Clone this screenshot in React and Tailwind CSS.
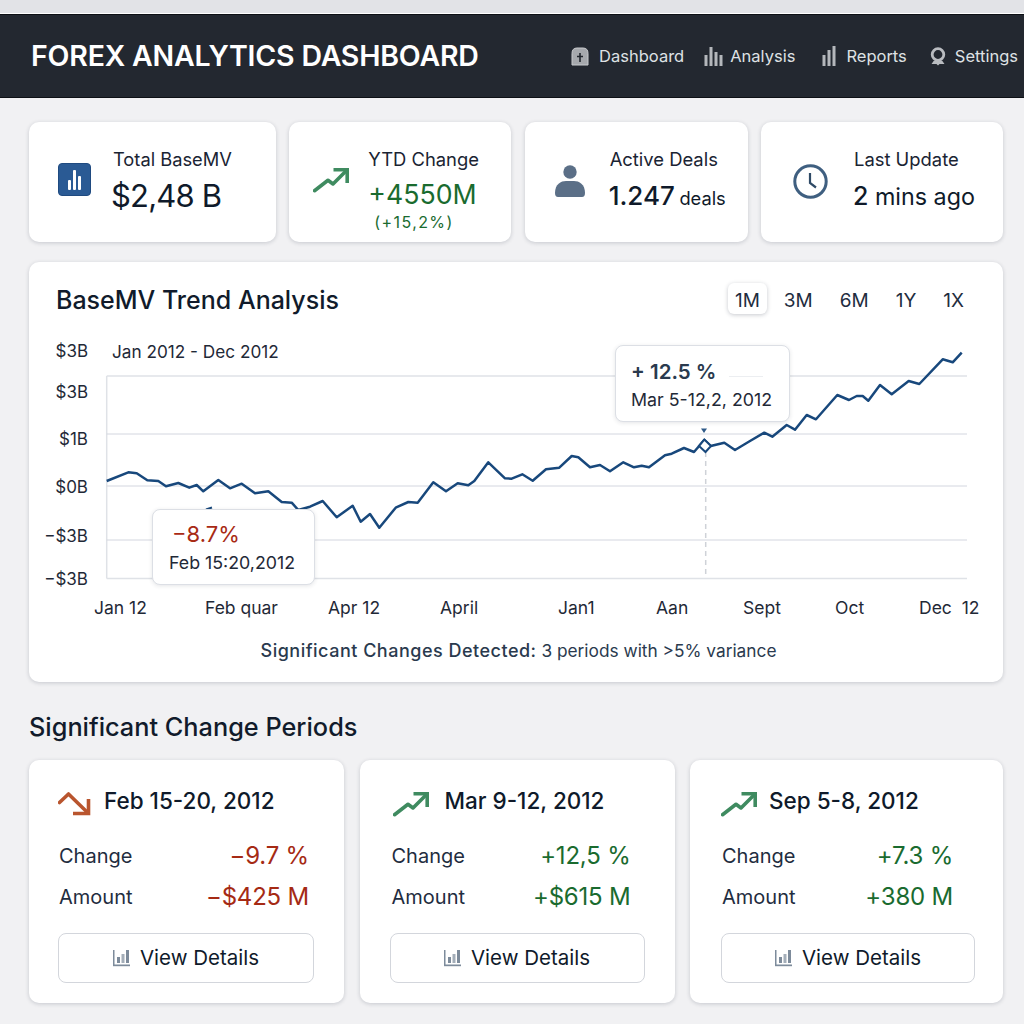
import React from 'react'

const linePoints = [
  [106.7, 481], [128.3, 472.3], [136.7, 473.3], [147.3, 480.3], [158.3, 481], [166, 486.3], [178.3, 483], [189.3, 487.7],
  [196.7, 485], [203.3, 491.3], [218.3, 480], [230, 488.3], [241.7, 483.7], [255, 493.3], [268.3, 491.3], [281.7, 502],
  [291.7, 502.7], [298.3, 510], [310, 506.7], [322.7, 501], [336.7, 517.3], [352.7, 505.7], [360.7, 521.7], [370, 514],
  [379.3, 527.7], [395.7, 507.7], [408.3, 502], [417.7, 502.7], [433.3, 482.3], [446, 491.3], [457.7, 483.3], [468.3, 485.3],
  [474.3, 481], [488.3, 462.3], [505, 478.3], [511.7, 478.7], [522.3, 474.3], [532.7, 480.7], [546, 469.3], [559.3, 467.7],
  [571.7, 456], [578.3, 457.3], [590, 467.3], [600, 465], [610, 471.3], [623.3, 462.3], [634, 467.3], [641.7, 465.7],
  [649, 467.3], [665, 455.3], [671.7, 453.7], [684, 448], [694, 452], [704.3, 440], [710.7, 446], [724.3, 442.7],
  [735, 450], [750, 441], [764.3, 432.7], [772.3, 436.7], [786.7, 425], [795, 429.7], [806.7, 415], [816, 419.3],
  [837.3, 395], [849, 400], [856.7, 396], [862.7, 396], [868.3, 400.7], [880, 385], [891.7, 394.3], [908.7, 381],
  [919.3, 384], [942.7, 359.3], [952.7, 362.3], [961.7, 352.7],
]

// Nav icons
const HomeIcon = () => (
  <svg width="18" height="19" viewBox="0 0 18 19">
    <path d="M1 18V6.500Q1 1 6 1h6q5 0 5 5.500V18z" fill="#a6a9ad" stroke="#c9cbce" strokeWidth="1" />
    <path d="M9 6v9M6 9.500h6" stroke="#22272e" strokeWidth="1.600" />
  </svg>
)

const AnalysisIcon = () => (
  <svg width="19" height="21" viewBox="0 0 19 21" fill="#b4b7bb">
    <rect x="0.500" y="9" width="3" height="11" />
    <rect x="5.500" y="1" width="3" height="19" />
    <rect x="10.500" y="6" width="3" height="14" />
    <rect x="15.500" y="9" width="3" height="11" />
  </svg>
)

const ReportsIcon = () => (
  <svg width="14" height="20" viewBox="0 0 14 20" fill="#b4b7bb">
    <rect x="0.500" y="9" width="3" height="11" />
    <rect x="5.500" y="4" width="3" height="16" />
    <rect x="10.500" y="0" width="3" height="20" />
  </svg>
)

const SettingsIcon = () => (
  <svg width="16" height="19" viewBox="0 0 16 19">
    <circle cx="8" cy="7.500" r="5.800" fill="none" stroke="#b9bcc0" strokeWidth="2.800" />
    <path d="M4 13.500h8l2.500 3.500H9.500L8 18.500 6.500 17H1.500z" fill="#b9bcc0" />
  </svg>
)

const TrendUp = () => (
  <svg width="36" height="25" viewBox="0 0 36 25" fill="none" stroke="#3f8b60" strokeWidth="3.600">
    <path d="M1.500 22.700 15 12.300l5 3.700L33 3" strokeLinecap="round" strokeLinejoin="round" />
    <path d="M20.500 1.800H34.200V15" strokeLinejoin="miter" />
  </svg>
)

const TrendDown = () => (
  <svg width="33" height="24" viewBox="0 0 33 24" fill="none" stroke="#b9552e" strokeWidth="3.600">
    <path d="M1.500 10.500 10.500 2 29 20" strokeLinecap="round" strokeLinejoin="round" />
    <path d="M15 21.500H30.500V7" />
  </svg>
)

const BaseIcon = () => (
  <svg width="33" height="33" viewBox="0 0 33 33">
    <rect x="0.500" y="0.500" width="32" height="32" rx="3.500" fill="#2a5a94" stroke="#1f4a80" />
    <rect x="10" y="17" width="3" height="10" rx="1" fill="#fff" />
    <rect x="15" y="7" width="3" height="20" rx="1" fill="#fff" />
    <rect x="20" y="13" width="3" height="14" rx="1" fill="#fff" />
  </svg>
)

const PersonIcon = () => (
  <svg width="30" height="32" viewBox="0 0 30 32" fill="#5b6f87">
    <circle cx="15" cy="7" r="6.700" />
    <path d="M0 28c0-9 6-12 11-12h8c5 0 11 3 11 12 0 2.500-1 4-3 4H3c-2 0-3-1.500-3-4z" />
  </svg>
)

const ClockIcon = () => (
  <svg width="35" height="35" viewBox="0 0 35 35" fill="none" stroke="#3f5f80">
    <circle cx="17.500" cy="17.500" r="15.700" strokeWidth="3" />
    <path d="M17 9v10l6 4.500" strokeWidth="2.200" stroke="#2f4a66" />
  </svg>
)

const DetailsIcon = () => (
  <svg width="17" height="18" viewBox="0 0 17 18" fill="#7d8b9b">
    <rect x="0" y="1" width="1.500" height="16" />
    <rect x="0" y="15.500" width="17" height="1.700" />
    <rect x="4" y="8" width="3" height="6" />
    <rect x="8.500" y="5" width="3" height="9" opacity="0.700" />
    <rect x="13" y="1" width="3" height="13" />
  </svg>
)

const navItems = [
  { label: 'Dashboard', icon: <HomeIcon />, cls: 'gap-[10px]' },
  { label: 'Analysis', icon: <AnalysisIcon />, cls: 'gap-[7px] ml-[20px]' },
  { label: 'Reports', icon: <ReportsIcon />, cls: 'gap-[10px] ml-[27px]' },
  { label: 'Settings', icon: <SettingsIcon />, cls: 'gap-[9px] ml-[23px]' },
]

const Header = () => (
  <>
    <div className="h-[13px] bg-[#e2e3e7]" />
    <div className="h-px bg-white" />
    <header className="flex h-[84px] items-center justify-between border-y border-[#0d1015] bg-[#232830] pl-[31px] pr-[6px]">
      <h1 className="text-[28.500px] font-semibold tracking-[-0.200px] text-white">FOREX ANALYTICS DASHBOARD</h1>
      <nav className="flex items-center">
        {navItems.map(item => (
          <div key={item.label} className={`flex items-center ${item.cls}`}>
            {item.icon}
            <span className="text-[16.500px] text-[#dfe1e4]">{item.label}</span>
          </div>
        ))}
      </nav>
    </header>
  </>
)

const cardCls = 'rounded-[10px] bg-white shadow-[0_1px_4px_rgba(30,40,60,0.2)]'

const StatCards = () => (
  <div className="grid grid-cols-[247px_222px_223px_242px] gap-[13.330px]">
    {/* Total BaseMV */}
    <div className={`${cardCls} flex h-[120px] pl-[29px] pt-[24px]`}>
      <div className="mt-[17px]"><BaseIcon /></div>
      <div className="ml-[20px]">
        <div className="ml-[2px] text-[18.300px] leading-[26px] text-[#1a2433]">Total BaseMV</div>
        <div className="mt-[6px] text-[31px] leading-[36px] tracking-[-0.800px] text-[#0f1a2a]">$2,48 B</div>
      </div>
    </div>
    {/* YTD */}
    <div className={`${cardCls} flex h-[120px] pl-[24px] pt-[24px]`}>
      <div className="mt-[22px]"><TrendUp /></div>
      <div className="ml-[19px]">
        <div className="text-[18.400px] leading-[26px] text-[#1a2433]">YTD Change</div>
        <div className="mt-[6px] text-[26.700px] leading-[32px] text-[#1a6b2f]">+4550M</div>
        <div className="ml-[6px] mt-[2px] text-[16px] leading-[20px] tracking-[1.400px] text-[#1a6b2f]">(+15,2%)</div>
      </div>
    </div>
    {/* Active Deals */}
    <div className={`${cardCls} flex h-[120px] pl-[30px] pt-[24px]`}>
      <div className="mt-[19px]"><PersonIcon /></div>
      <div className="ml-[24px]">
        <div className="ml-[1px] text-[18.400px] leading-[26px] text-[#1a2433]">Active Deals</div>
        <div className="mt-[6px] whitespace-nowrap leading-[36px] text-[#0f1a2a]">
          <span className="text-[26px] font-medium">1.247</span> <span className="text-[18.300px]">deals</span>
        </div>
      </div>
    </div>
    {/* Last Update */}
    <div className={`${cardCls} flex h-[120px] pl-[32px] pt-[24px]`}>
      <div className="mt-[18px]"><ClockIcon /></div>
      <div className="ml-[25px]">
        <div className="ml-[1px] text-[18.400px] leading-[26px] text-[#1a2433]">Last Update</div>
        <div className="mt-[6px] whitespace-nowrap text-[23.300px] leading-[36px] text-[#0f1a2a]">
          <span className="text-[25px] font-medium">2</span> mins ago
        </div>
      </div>
    </div>
  </div>
)

const tabs = [
  { label: '1M', cls: '-mr-[3px] shadow-[0_1px_4px_rgba(30,40,60,0.25)]' },
  { label: '3M', cls: '' },
  { label: '6M', cls: '' },
  { label: '1Y', cls: '' },
  { label: '1X', cls: '' },
]

const yLabels = [
  { label: '$3B', cls: 'mt-[17px]' },
  { label: '$1B', cls: 'mt-[23px]' },
  { label: '$0B', cls: 'mt-[24px]' },
  { label: '−$3B', cls: 'mt-[25px]' },
  { label: '−$3B', cls: 'mt-[19px]' },
]

const xLabels = ['Jan 12', 'Feb quar', 'Apr 12', 'April', 'Jan1', 'Aan', 'Sept', 'Oct', 'Dec\u00a0\u00a012']

const TrendChart = () => (
  <section className={`${cardCls} mt-[20px] h-[420px]`}>
    <div className="flex items-start justify-between pl-[27px] pr-[32px] pt-[21px]">
      <h2 className="text-[25px] font-medium leading-[34px] text-[#111b2b]">BaseMV Trend Analysis</h2>
      <div className="flex gap-[13px]">
        {tabs.map(t => (
          <button
            key={t.label}
            className={`h-[31px] rounded-[6px] px-[7px] pt-[4px] text-[19px] text-[#1f2d40] ${t.cls}`}
          >
            {t.label}
          </button>
        ))}
      </div>
    </div>

    <div className="mt-[22px] flex h-[24px] items-center pl-[11px] pt-[2px] text-[17px] text-[#1f2937]">
      <span className="w-[48px] text-right">$3B</span>
      <span className="ml-[24px] text-[17.200px]">Jan 2012 - Dec 2012</span>
    </div>

    <div className="flex pl-[11px]">
      <div className="w-[48px] text-right text-[17px] text-[#1f2937]">
        {yLabels.map((y, i) => (
          <div key={i} className={`h-[24px] leading-[24px] ${y.cls}`}>{y.label}</div>
        ))}
      </div>
      <div className="relative ml-[12px] h-[222px] w-[870px]">
        <svg width="870" height="222" viewBox="100 363 870 222" fill="none" className="overflow-visible">
          <path d="M106.700 376H967M106.700 578.500H967M106.700 376V578.500" stroke="#dfe2e7" strokeWidth="1.500" />
          <path d="M106.700 434H967M106.700 486H967M106.700 540H967" stroke="#d3d6df" />
          <path d="M705.700 452V578" stroke="#cfd2d8" strokeWidth="1.500" strokeDasharray="5 4" />
          <polyline
            points={linePoints.map(p => p.join(',')).join(' ')}
            stroke="#18487c"
            strokeWidth="2.500"
            strokeLinejoin="round"
          />
          <path d="M206 509.500 212 507.500" stroke="#18487c" strokeWidth="2" />
          <path d="M699 446 704.300 439.500 711 446 705.500 452z" fill="#fff" stroke="#18487c" strokeWidth="2" />
          <path d="M701 428.500h6l-3 4.500z" fill="#2f5a88" />
        </svg>

        {/* Tooltips */}
        <div className="absolute left-[52px] top-[146px] h-[76px] w-[163px] rounded-[8px] border border-[#dcdfe5] bg-white pl-[16px] pt-[10px] shadow-[0_1px_4px_rgba(30,40,60,0.12)]">
          <div className="pl-[3px] text-[22px] leading-[28px] text-[#a82a14]">−8.7%</div>
          <div className="mt-[3px] whitespace-nowrap text-[17.800px] leading-[24px] text-[#1f2937]">Feb 15:20,2012</div>
        </div>
        <div className="absolute left-[515px] top-[-18px] h-[77px] w-[175px] rounded-[8px] border border-[#dcdfe5] bg-white pl-[15px] pt-[12px] shadow-[0_1px_4px_rgba(30,40,60,0.12)]">
          <div className="text-[20.500px] font-semibold leading-[28px] text-[#2a3a4e]">+ 12.5 %</div>
          <div className="mt-[2px] whitespace-nowrap text-[17.800px] leading-[24px] text-[#1f2937]">Mar 5-12,2, 2012</div>
          <div className="absolute left-[113px] top-[30px] h-px w-[34px] bg-[#eceef1]" />
        </div>
      </div>
    </div>

    <div className="mt-[5px] grid grid-cols-[111px_123px_112px_118px_98px_87px_92px_84px_auto] pl-[65px] text-[17.500px] leading-[24px] text-[#1f2937]">
      {xLabels.map((x, i) => (
        <span key={i} className="whitespace-nowrap">{x}</span>
      ))}
    </div>

    <p className="mt-[19px] pl-[5px] text-center text-[17.300px] leading-[24px] text-[#2a3a4e]">
      <span className="text-[18px] font-medium tracking-[0.500px]">Significant Changes Detected:</span> 3 periods with &gt;5% variance
    </p>
  </section>
)

const periods = [
  {
    title: 'Feb 15-20, 2012',
    change: '−9.7 %',
    amount: '−$425 M',
    up: false,
    padCls: 'pl-[29px] pr-[30px]',
    headCls: 'gap-[13px]',
    rowCls: 'pl-[1px] pr-[5px]',
  },
  {
    title: 'Mar 9-12, 2012',
    change: '+12,5 %',
    amount: '+$615 M',
    up: true,
    padCls: 'px-[30px]',
    headCls: 'gap-[16px] pl-[3px]',
    rowCls: 'pl-[2px] pr-[14px]',
  },
  {
    title: 'Sep 5-8, 2012',
    change: '+7.3 %',
    amount: '+380 M',
    up: true,
    padCls: 'pl-[31px] pr-[28px]',
    headCls: 'gap-[12px]',
    rowCls: 'pl-[1px] pr-[22px]',
  },
]

const PeriodCard = ({ p }) => (
  <div className={`${cardCls} h-[243px] pt-[26px] ${p.padCls}`}>
    <div className={`flex h-[30px] items-center ${p.headCls}`}>
      <div className="mt-[6px]">{p.up ? <TrendUp /> : <TrendDown />}</div>
      <span className="text-[22.500px] font-medium text-[#0f1a2a]">{p.title}</span>
    </div>
    <div className={`mt-[25px] flex h-[30px] items-center justify-between ${p.rowCls}`}>
      <span className="text-[20px] text-[#1f2d40]">Change</span>
      <span className={`text-[24px] tracking-[-0.200px] ${p.up ? 'text-[#1a6b2f]' : 'text-[#a52a14]'}`}>{p.change}</span>
    </div>
    <div className={`mt-[11px] flex h-[30px] items-center justify-between ${p.rowCls}`}>
      <span className="text-[20px] text-[#1f2d40]">Amount</span>
      <span className={`text-[24px] tracking-[-0.200px] ${p.up ? 'text-[#1a6b2f]' : 'text-[#a52a14]'}`}>{p.amount}</span>
    </div>
    <button className="mt-[21px] flex h-[50px] w-full items-center justify-center gap-[10px] rounded-[8px] border border-[#d3d6dc] bg-white text-[20.500px] text-[#0f1a2a]">
      <DetailsIcon />
      View Details
    </button>
  </div>
)

export default function App() {
  return (
    <div className="min-h-screen bg-[#f1f1f3] [font-family:Inter,sans-serif]">
      <Header />
      <main className="pl-[29px] pr-[21px] pt-[24px]">
        <StatCards />
        <TrendChart />
        <h2 className="mt-[28px] text-[25.300px] font-medium leading-[34px] text-[#111b2b]">Significant Change Periods</h2>
        <div className="mt-[16px] grid grid-cols-[315px_315px_313px] gap-[15.500px]">
          {periods.map(p => (
            <PeriodCard key={p.title} p={p} />
          ))}
        </div>
      </main>
    </div>
  )
}
